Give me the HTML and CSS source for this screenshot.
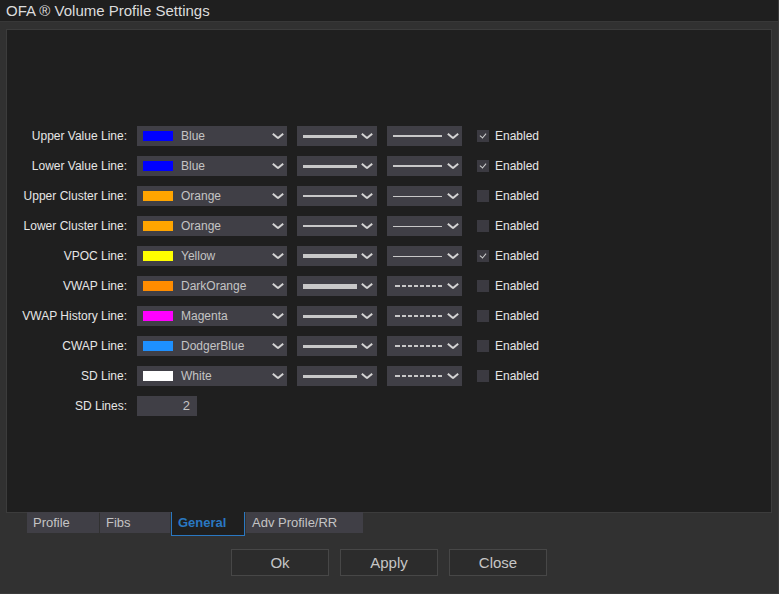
FILE: index.html
```html
<!DOCTYPE html>
<html lang="en">

<head>
    <meta charset="UTF-8">
    <title>OFA ® Volume Profile Settings</title>
    <link rel="stylesheet" href="styles.css">
</head>

<body>
    <div class="window">
        <div class="title-bar">OFA ® Volume Profile Settings</div>

        <div class="content">
            <div class="panel">
                <div class="form">
                    <label>Upper Value Line:</label>
                    <div class="select color"><span class="swatch" style="background: #0000ff;"></span>Blue<i class="chev"></i></div>
                    <div class="select weight"><span class="line" style="height: 3px;"></span><i class="chev"></i></div>
                    <div class="select dash"><span class="line" style="height: 2px;"></span><i class="chev"></i></div>
                    <div class="check"><span class="box checked"></span>Enabled</div>

                    <label>Lower Value Line:</label>
                    <div class="select color"><span class="swatch" style="background: #0000ff;"></span>Blue<i class="chev"></i></div>
                    <div class="select weight"><span class="line" style="height: 3px;"></span><i class="chev"></i></div>
                    <div class="select dash"><span class="line" style="height: 2px;"></span><i class="chev"></i></div>
                    <div class="check"><span class="box checked"></span>Enabled</div>

                    <label>Upper Cluster Line:</label>
                    <div class="select color"><span class="swatch" style="background: #ffa500;"></span>Orange<i class="chev"></i></div>
                    <div class="select weight"><span class="line" style="height: 2px;"></span><i class="chev"></i></div>
                    <div class="select dash"><span class="line" style="height: 1px;"></span><i class="chev"></i></div>
                    <div class="check"><span class="box"></span>Enabled</div>

                    <label>Lower Cluster Line:</label>
                    <div class="select color"><span class="swatch" style="background: #ffa500;"></span>Orange<i class="chev"></i></div>
                    <div class="select weight"><span class="line" style="height: 2px;"></span><i class="chev"></i></div>
                    <div class="select dash"><span class="line" style="height: 1px;"></span><i class="chev"></i></div>
                    <div class="check"><span class="box"></span>Enabled</div>

                    <label>VPOC Line:</label>
                    <div class="select color"><span class="swatch" style="background: #ffff00;"></span>Yellow<i class="chev"></i></div>
                    <div class="select weight"><span class="line" style="height: 4px;"></span><i class="chev"></i></div>
                    <div class="select dash"><span class="line" style="height: 1px;"></span><i class="chev"></i></div>
                    <div class="check"><span class="box checked"></span>Enabled</div>

                    <label>VWAP Line:</label>
                    <div class="select color"><span class="swatch" style="background: #ff8c00;"></span>DarkOrange<i class="chev"></i></div>
                    <div class="select weight"><span class="line" style="height: 5px;"></span><i class="chev"></i></div>
                    <div class="select dash"><span class="line dashed"></span><i class="chev"></i></div>
                    <div class="check"><span class="box"></span>Enabled</div>

                    <label>VWAP History Line:</label>
                    <div class="select color"><span class="swatch" style="background: #ff00ff;"></span>Magenta<i class="chev"></i></div>
                    <div class="select weight"><span class="line" style="height: 3px;"></span><i class="chev"></i></div>
                    <div class="select dash"><span class="line dashed"></span><i class="chev"></i></div>
                    <div class="check"><span class="box"></span>Enabled</div>

                    <label>CWAP Line:</label>
                    <div class="select color"><span class="swatch" style="background: #1e90ff;"></span>DodgerBlue<i class="chev"></i></div>
                    <div class="select weight"><span class="line" style="height: 3px;"></span><i class="chev"></i></div>
                    <div class="select dash"><span class="line dashed"></span><i class="chev"></i></div>
                    <div class="check"><span class="box"></span>Enabled</div>

                    <label>SD Line:</label>
                    <div class="select color"><span class="swatch" style="background: #ffffff;"></span>White<i class="chev"></i></div>
                    <div class="select weight"><span class="line" style="height: 3px;"></span><i class="chev"></i></div>
                    <div class="select dash"><span class="line dashed"></span><i class="chev"></i></div>
                    <div class="check"><span class="box"></span>Enabled</div>

                    <label>SD Lines:</label>
                    <div class="number">2</div>
                </div>
            </div>

            <div class="tabs">
                <div class="tab" style="width: 72px;">Profile</div>
                <div class="tab" style="width: 70px;">Fibs</div>
                <div class="tab active" style="width: 74px;">General</div>
                <div class="tab" style="width: 117px;">Adv Profile/RR</div>
            </div>

            <div class="buttons">
                <button>Ok</button>
                <button>Apply</button>
                <button>Close</button>
            </div>
        </div>
    </div>
</body>

</html>
```

FILE: styles.css
```css
:root {
    --title-bg: #1f1f1f;
    --body-bg: #313131;
    --panel-bg: #1f1f1f;
    --panel-border: #3c3c3c;
    --control: #403f46;
    --text: #e6e6e6;
    --muted: #c4c4c4;
    --accent: #2a78c2;
}

* {
    box-sizing: border-box;
}

body {
    margin: 0;
    background: var(--body-bg);
    font-family: 'Liberation Sans', Arial, sans-serif;
    font-size: 12px;
    color: var(--text);
    overflow: hidden;
}

.window {
    width: 779px;
    height: 594px;
    border-right: 1px solid #3a3a3a;
    border-bottom: 1px solid #3a3a3a;
    display: flex;
    flex-direction: column;
}

.title-bar {
    height: 22px;
    background: var(--title-bg);
    border-bottom: 1px solid #383838;
    color: #dcdcdc;
    font-size: 15px;
    line-height: 22px;
    padding-left: 6px;
}

.content {
    flex-grow: 1;
    padding: 7px 6px 0 6px;
}

.panel {
    width: 766px;
    height: 484px;
    background: var(--panel-bg);
    border: 1px solid var(--panel-border);
    padding-top: 96px;
}

.form {
    display: grid;
    grid-template-columns: 120px 150px 80px 75px auto;
    grid-auto-rows: 20px;
    column-gap: 10px;
    row-gap: 10px;
    align-items: center;
}

.form label {
    text-align: right;
    white-space: nowrap;
}

.select {
    height: 20px;
    background: var(--control);
    display: flex;
    align-items: center;
    position: relative;
    color: var(--muted);
    padding-left: 6px;
}

.swatch {
    width: 30px;
    height: 10px;
    margin-right: 8px;
}

.select.weight .line {
    width: 54px;
}

.select.dash .line {
    width: 49px;
}

.line {
    display: block;
    background: #c8c8c8;
}

.line.dashed {
    height: 2px;
    background: repeating-linear-gradient(90deg, #c8c8c8 0 4px, transparent 4px 6px);
    background-position: 3px 0;
}

.chev {
    position: absolute;
    right: 4px;
    top: 7px;
    width: 10px;
    height: 6px;
}

.chev::before,
.chev::after {
    content: "";
    position: absolute;
    top: 2px;
    width: 7px;
    height: 2px;
    background: #d4d4d4;
}

.chev::before {
    left: -1px;
    transform: rotate(40deg);
}

.chev::after {
    right: -1px;
    transform: rotate(-40deg);
}

.select.weight .chev {
    right: 5px;
}

.check {
    display: flex;
    align-items: center;
    margin-left: 5px;
    white-space: nowrap;
}

.box {
    width: 12px;
    height: 12px;
    background: #3b3a41;
    margin-right: 6px;
    position: relative;
}

.box.checked::after {
    content: "";
    position: absolute;
    left: 4px;
    top: 2px;
    width: 3px;
    height: 5px;
    border-right: 1.5px solid #d0d0d0;
    border-bottom: 1.5px solid #d0d0d0;
    transform: rotate(40deg);
}

.number {
    width: 60px;
    height: 20px;
    background: var(--control);
    color: var(--muted);
    text-align: right;
    padding-right: 7px;
    line-height: 20px;
    font-size: 13px;
}

.tabs {
    display: flex;
    gap: 1px;
    margin-top: -1px;
    padding-left: 21px;
    height: 24px;
}

.tab {
    height: 21px;
    background: var(--control);
    color: var(--muted);
    font-size: 13px;
    line-height: 21px;
    padding-left: 6px;
}

.tab.active {
    height: 24px;
    background: var(--panel-bg);
    border: 1px solid var(--accent);
    border-top: none;
    color: var(--accent);
    font-weight: bold;
    line-height: 22px;
}

.buttons {
    display: flex;
    justify-content: center;
    gap: 11px;
    margin-top: 13px;
}

.buttons button {
    width: 98px;
    height: 27px;
    background: #2c2c2c;
    border: 1px solid #474747;
    color: #c6c6c6;
    font-family: 'Liberation Sans', Arial, sans-serif;
    font-size: 15px;
    padding: 0;
}
```
